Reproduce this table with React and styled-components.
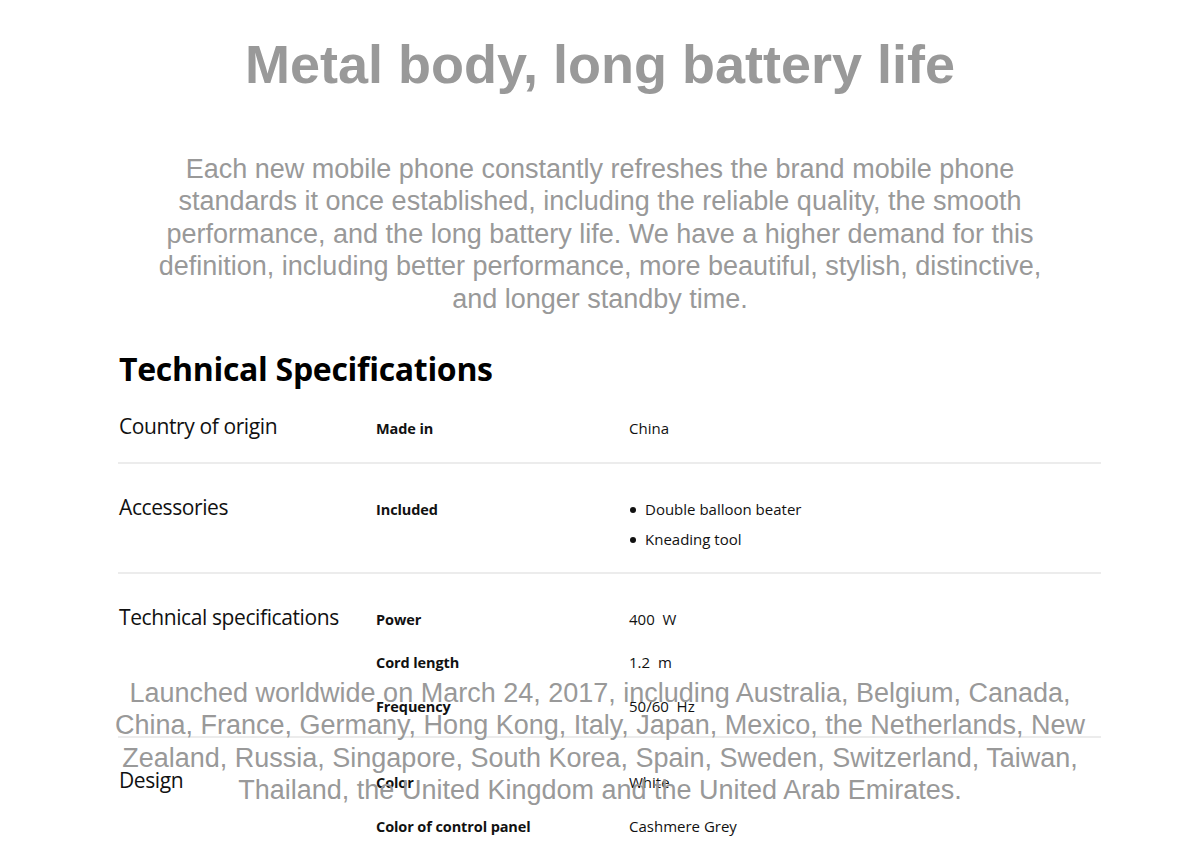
import React from "react";
import styled, { createGlobalStyle } from "styled-components";

const GlobalStyle = createGlobalStyle`
  html, body {
    margin: 0;
    padding: 0;
    background: #ffffff;
  }
  body {
    font-family: "Liberation Sans", Arial, sans-serif;
  }
  * { box-sizing: border-box; }
`;

const Page = styled.main`
  width: 1200px;
  display: flex;
  flex-direction: column;
  align-items: center;
  padding-top: 32px;
`;

const Title = styled.h1`
  margin: 0;
  font-family: "Liberation Sans", Arial, sans-serif;
  font-size: 54px;
  line-height: 64px;
  font-weight: 700;
  color: #999999;
  text-align: center;
`;

const Lead = styled.p`
  margin: 57px 0 0;
  width: 900px;
  font-family: "Liberation Sans", Arial, sans-serif;
  font-size: 27px;
  line-height: 1.2;
  color: #999999;
  text-align: center;
`;

const SpecSection = styled.section`
  position: relative;
  align-self: stretch;
  margin-top: 35px;
  padding: 0 99px 0 118px;
  font-family: "Open Sans", "Noto Sans", sans-serif;
  color: #111111;
`;

const SpecTitle = styled.h2`
  margin: 0 0 -3px 1px;
  font-size: 32px;
  line-height: 1.2;
  font-weight: 700;
  letter-spacing: -0.3px;
  color: #000000;
`;

const SpecRow = styled.div`
  display: grid;
  grid-template-columns: 257px 1fr;
  align-items: baseline;
  padding: ${(p) => p.$top}px 0 ${(p) => p.$bottom}px 1px;
  border-bottom: 2px solid #ececec;
`;

const RowLabel = styled.div`
  font-size: 21px;
  line-height: 28px;
  letter-spacing: -0.4px;
  color: #111111;
`;

const Pairs = styled.div`
  display: grid;
  grid-template-columns: 253px 1fr;
  row-gap: 22.5px;
  align-items: baseline;
`;

const Key = styled.div`
  font-size: 14.5px;
  line-height: 20px;
  font-weight: 700;
  letter-spacing: -0.1px;
`;

const Value = styled.div`
  font-size: 15px;
  line-height: 20px;
  white-space: pre;
`;

const BulletList = styled.ul`
  margin: 0;
  padding: 0;
  list-style: none;
  display: flex;
  flex-direction: column;
  gap: 10px;
`;

const Bullet = styled.li`
  position: relative;
  padding-left: 16px;
  font-size: 15px;
  line-height: 20px;
  &::before {
    content: "";
    position: absolute;
    left: 1px;
    top: 8px;
    width: 6px;
    height: 6px;
    border-radius: 50%;
    background: #111111;
  }
`;

const LaunchNote = styled.p`
  position: absolute;
  top: 327px;
  left: 0;
  right: 0;
  margin: 0 auto;
  width: 1000px;
  font-family: "Liberation Sans", Arial, sans-serif;
  font-size: 27px;
  line-height: 1.2;
  color: #999999;
  text-align: center;
  z-index: 1;
`;

const specs = [
  { label: "Country of origin", top: 27, bottom: 22, pairs: [["Made in", "China"]] },
  {
    label: "Accessories",
    top: 29,
    bottom: 23,
    pairs: [["Included", ["Double balloon beater", "Kneading tool"]]],
  },
  {
    label: "Technical specifications",
    top: 28.5,
    bottom: 19.5,
    pairs: [
      ["Power", "400  W"],
      ["Cord length", "1.2  m"],
      ["Frequency", "50/60  Hz"],
    ],
  },
  {
    label: "Design",
    top: 28,
    bottom: 22,
    pairs: [
      ["Color", "White"],
      ["Color of control panel", "Cashmere Grey"],
    ],
  },
];

export default function App() {
  return (
    <>
      <GlobalStyle />
      <Page>
        <Title>Metal body, long battery life</Title>
        <Lead>
          Each new mobile phone constantly refreshes the brand mobile phone
          standards it once established, including the reliable quality, the
          smooth performance, and the long battery life. We have a higher
          demand for this definition, including better performance, more
          beautiful, stylish, distinctive, and longer standby time.
        </Lead>
        <SpecSection>
          <SpecTitle>Technical Specifications</SpecTitle>
          {specs.map((row) => (
            <SpecRow key={row.label} $top={row.top} $bottom={row.bottom}>
              <RowLabel>{row.label}</RowLabel>
              <Pairs>
                {row.pairs.map(([k, v]) => (
                  <React.Fragment key={k}>
                    <Key>{k}</Key>
                    {Array.isArray(v) ? (
                      <BulletList>
                        {v.map((item) => (
                          <Bullet key={item}>{item}</Bullet>
                        ))}
                      </BulletList>
                    ) : (
                      <Value>{v}</Value>
                    )}
                  </React.Fragment>
                ))}
              </Pairs>
            </SpecRow>
          ))}
          <LaunchNote>
            Launched worldwide on March 24, 2017, including Australia, Belgium,
            Canada, China, France, Germany, Hong Kong, Italy, Japan, Mexico, the
            Netherlands, New Zealand, Russia, Singapore, South Korea, Spain,
            Sweden, Switzerland, Taiwan, Thailand, the United Kingdom and the
            United Arab Emirates.
          </LaunchNote>
        </SpecSection>
      </Page>
    </>
  );
}
